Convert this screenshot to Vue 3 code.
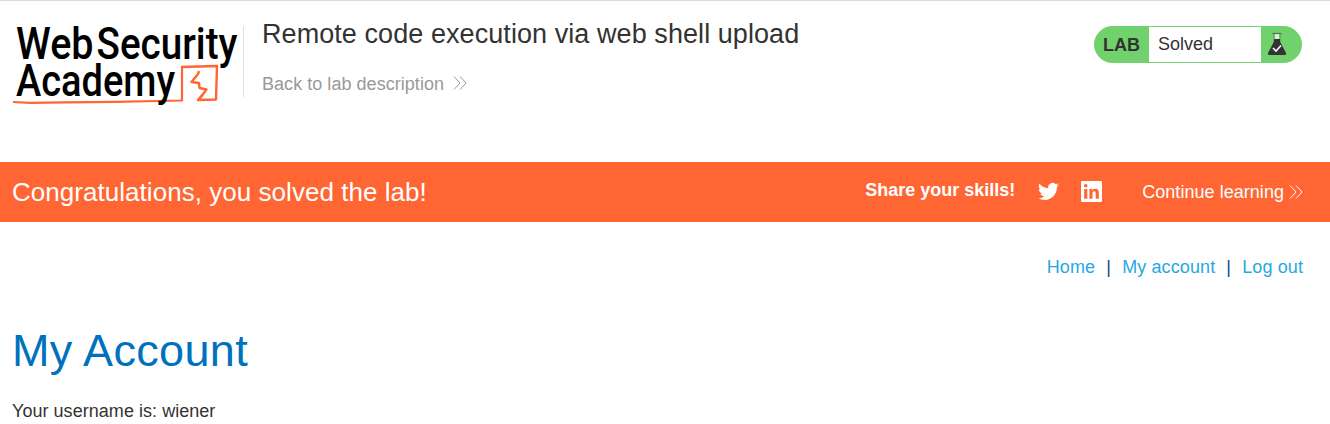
<script setup>
const links = ['Home', 'My account', 'Log out']
</script>

<template>
  <div class="page">
    <header class="header">
      <svg class="logo" width="232" height="90" viewBox="10 20 232 90" role="img" aria-label="Web Security Academy">
        <g fill="none" stroke="#ff6633" stroke-width="2.400" stroke-linejoin="round">
          <path stroke-width="2.200" d="M13 102 L30 102.800 L65 102.300 L115 101.800 L157 101 L182 100.500 L182 67.500" />
          <path d="M181 67 L217 66 L216 99.500 L198 100 L203 94 M199 99.500 L206.500 89.500 L199.500 88 L199 83 L191.500 82 L198 74 L199 71" />
        </g>
        <g class="logo-text">
          <text x="16" y="59" textLength="77.500" lengthAdjust="spacingAndGlyphs">Web</text>
          <text x="96.5" y="59" textLength="141" lengthAdjust="spacingAndGlyphs">Security</text>
          <text x="16" y="96" textLength="159" lengthAdjust="spacingAndGlyphs">Academy</text>
        </g>
      </svg>
      <div class="heading">
        <h2>Remote code execution via web shell upload</h2>
        <a class="back">Back to lab description
          <svg width="14" height="14" viewBox="0 0 14 14"><path d="M1 .5 7 7 1 13.500M7 .5 13 7 7 13.500" /></svg>
        </a>
      </div>
      <div class="status">
        <b>LAB</b>
        <span>Solved</span>
        <svg width="20" height="25" viewBox="0 0 20 25">
          <path d="M7.500 3h5v6h-5z" fill="#d9f3d7" />
          <path d="M7 3 V11 M13 3 V11" stroke="#5f8f5b" fill="none" />
          <path d="M5.500 2.500h9" stroke="#55704f" stroke-width="1.200" />
          <path d="M7 8h6v2.500l6 11.500q.6 2-1.500 2h-15q-2.100 0-1.500-2L7 10.500z" fill="#333" />
          <path d="m6 17 3 3 5-5.500" stroke="#fff" stroke-width="1.600" fill="none" />
        </svg>
      </div>
    </header>

    <section class="banner">
      <h4>Congratulations, you solved the lab!</h4>
      <div class="share">
        <b>Share your skills!</b>
        <svg class="twitter" width="21" height="21" viewBox="0 0 24 24"><path fill="#fff" d="M23.950 4.570a10 10 0 0 1-2.820.77 4.960 4.960 0 0 0 2.160-2.720c-.95.550-2 .95-3.130 1.180a4.920 4.920 0 0 0-8.380 4.480C7.690 8.090 4.070 6.130 1.640 3.160a4.820 4.820 0 0 0-.67 2.480c0 1.710.87 3.210 2.190 4.100a4.900 4.900 0 0 1-2.230-.62v.06a4.920 4.920 0 0 0 3.950 4.830 5 5 0 0 1-2.210.08 4.940 4.940 0 0 0 4.600 3.420A9.870 9.870 0 0 1 0 19.540a14 14 0 0 0 7.550 2.210c9.050 0 14-7.500 14-13.980 0-.21 0-.42-.02-.63a9.940 9.940 0 0 0 2.420-2.570z" /></svg>
        <svg class="linkedin" width="21" height="21" viewBox="0 0 20 20">
          <rect width="20" height="20" rx="1.300" fill="#fff" />
          <path fill="#ff6633" d="M3 7.500h3V17H3zM8 7.500h2.800v1.300c.6-1 1.600-1.500 2.800-1.500 2.700 0 3.400 1.700 3.400 4.200V17h-3v-4.900c0-1.300-.1-2.400-1.500-2.400S11 10.800 11 12v5H8z" />
          <circle cx="4.500" cy="4.500" r="1.700" fill="#ff6633" />
        </svg>
        <a class="continue">Continue learning
          <svg width="14" height="14" viewBox="0 0 14 14"><path d="M1 .5 7 7 1 13.500M7 .5 13 7 7 13.500" /></svg>
        </a>
      </div>
    </section>

    <main>
      <nav>
        <template v-for="(link, i) in links" :key="link">
          <i v-if="i">|</i><a>{{ link }}</a>
        </template>
      </nav>
      <h1>My Account</h1>
      <p>Your username is: wiener</p>
    </main>
  </div>
</template>

<style>
body { margin: 0; background: #fff; }
</style>

<style scoped>
.page { box-sizing: border-box; height: 424px; overflow: hidden; border-top: 1px solid #dcdcdc; font: 18px/20px "Liberation Sans", Arial, sans-serif; color: #333332; }
h1, h2, h4, p { margin: 0; font-weight: 400; }
.header { display: flex; align-items: flex-start; height: 161px; padding: 0 28px 0 10px; box-sizing: border-box; }
.logo { display: block; margin-top: 19px; flex: none; overflow: visible; }
.logo-text { font: 500 43.500px Roboto, sans-serif; fill: #000; }
.heading { box-sizing: border-box; height: 71px; margin: 25px 0 0 1px; padding-left: 18px; border-left: 1px solid #e0e0e0; }
h2 { font-size: 27px; letter-spacing: .07px; line-height: 30px; margin-top: -7px; white-space: nowrap; }
.back, .continue { display: flex; align-items: center; white-space: nowrap; letter-spacing: .04px; }
.back { margin-top: 25px; gap: 9px; color: #999; }
.back svg, .continue svg { fill: none; stroke: #999; stroke-width: 1; }
.back svg { margin-top: -2px; }
.status { display: flex; box-sizing: border-box; width: 208px; height: 37px; margin: 25px 0 0 auto; border: 1px solid #70d16d; border-radius: 19px; background: #70d16d; line-height: 35px; }
.status b { width: 54px; box-sizing: border-box; padding-left: 8px; line-height: 36px; }
.status span { width: 112px; box-sizing: border-box; padding-left: 9px; background: #fff; }
.status svg { margin: 4px 0 0 6px; }
.banner { display: flex; align-items: center; justify-content: space-between; height: 60px; padding: 0 27px 0 12px; background: #ff6633; color: #fff; }
h4 { font-size: 26px; letter-spacing: .04px; line-height: 30px; }
.share { display: flex; align-items: center; }
.share b { margin-top: -4px; }
.twitter { margin: -1px 0 0 23px; }
.linkedin { margin: -1px 0 0 22px; }
.continue { margin-left: 40px; gap: 5px; }
.continue svg { stroke: #fff; }
main { padding: 0 27px 0 12px; }
nav { display: flex; justify-content: flex-end; padding-top: 35px; color: #29a7df; letter-spacing: .1px; }
nav i { width: 27px; text-align: center; font-style: normal; color: #094a8c; }
h1 { margin-top: 48px; font-size: 45px; letter-spacing: .35px; line-height: 52px; color: #0071bc; }
p { margin-top: 24px; letter-spacing: .04px; }
</style>
